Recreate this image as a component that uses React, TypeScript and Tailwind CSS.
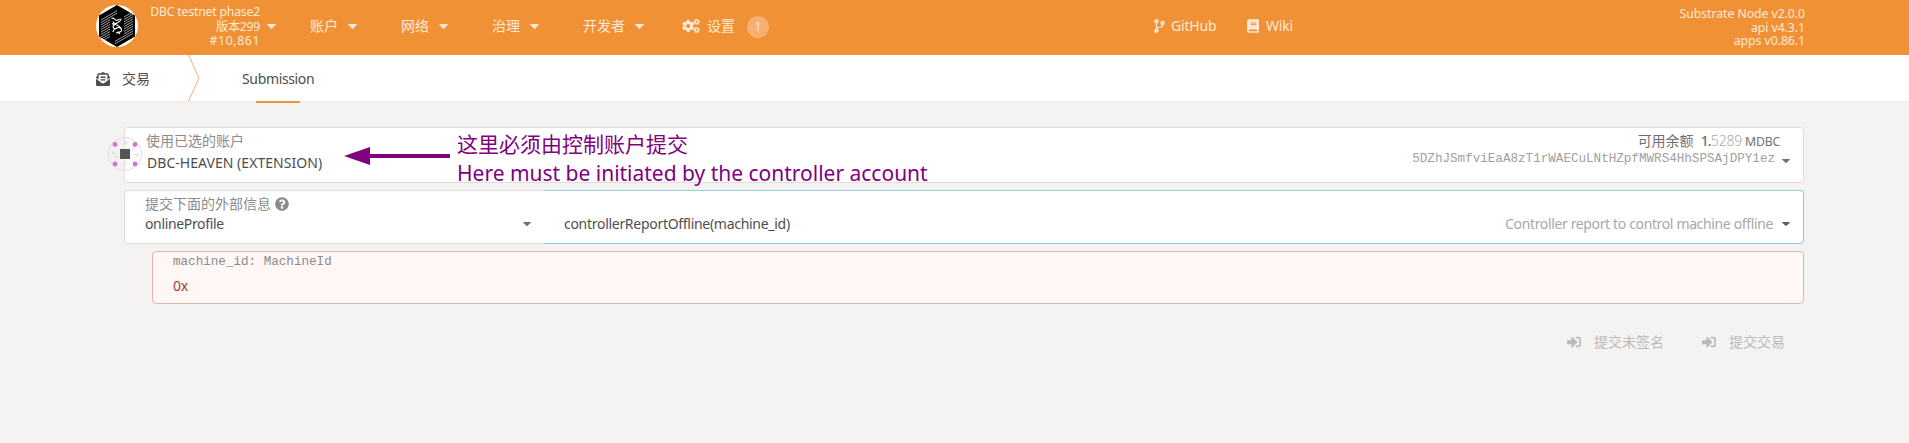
import type { ReactNode } from "react";
import { FaBook, FaCodeBranch, FaCogs, FaEnvelopeOpenText, FaQuestionCircle, FaSignInAlt } from "react-icons/fa";

function Caret({ className }: { className: string }) {
  return (
    <svg viewBox="0 0 10 6" preserveAspectRatio="none" className={`block shrink-0 ${className}`} fill="currentColor">
      <path d="M.6 0h8.8q.9.2.3 1L5.6 5.6q-.6.5-1.200 0L.3 1Q-.3.2.6 0z" />
    </svg>
  );
}

function Logo() {
  const rows = [0, 1, 2, 3, 4, 5, 6, 7, 8, 9];
  return (
    <svg viewBox="0 0 42 42" className="mt-[5px] ml-24 block h-[42px] w-[42px] shrink-0">
      <circle cx="21" cy="21" r="21" fill="#fff" />
      <path d="M21 0 39 10.500v21L21 42 3 31.500v-21z" fill="#000" />
      <g stroke="#c4c4c4" strokeWidth=".8">
        {rows.map((i) => (
          <path key={i} d={`M5 ${15 + i * 2.4} L${i < 2 ? 21 : 14} ${(i < 2 ? 5.800 : 9.800) + i * 2.4}`} />
        ))}
        {rows.map((i) => (
          <path key={i} d={`M${i > 7 ? 19 : 28} ${(i > 7 ? 17.200 : 12) + i * 2.4} L37 ${6.800 + i * 2.4}`} />
        ))}
      </g>
      <g stroke="#fff" strokeWidth="1.100" fill="none">
        <path d="M15.500 13.500q2-1 3.500 1t4.500-.5M25 13.500c0 5-8 4.500-8 8.500M16 18.500q2 1.500 4.500-.5M17 16.500c1 4 8.500 4 8.500 8.500M17 22q1 2.500 4 1t4.500 1.500q.5 3-4 2.500M17 27c0-3 3-3.500 5-4.500M24 29q-1-2-4-1" />
      </g>
    </svg>
  );
}

function NavItem({ label, className }: { label: string; className: string }) {
  return (
    <div className={`flex items-center gap-[10px] ${className}`}>
      <span>{label}</span>
      <Caret className="mt-px h-[5px] w-[9px]" />
    </div>
  );
}

function Header() {
  return (
    <header className="flex h-[55px] bg-[#f19135] text-[14px] leading-5 text-[#fde9d6]">
      <Logo />
      <div className="mt-[5px] w-[122px] text-right text-[12.25px] leading-[14.5px]">
        <div className="tracking-[-0.2px]">DBC testnet phase2</div>
        <div className="tracking-[-0.3px]">版本299</div>
        <div className="tracking-[0.6px]">#10,861</div>
      </div>
      <Caret className="mt-6 ml-[7px] h-[5px] w-[9px]" />
      <nav className="flex h-[52px] items-center">
        <NavItem label="账户" className="ml-[34px] w-[91px]" />
        <NavItem label="网络" className="w-[91px]" />
        <NavItem label="治理" className="w-[91px]" />
        <NavItem label="开发者" className="w-[99px]" />
        <FaCogs className="h-[14px] w-[18px]" />
        <span className="ml-[7px]">设置</span>
        <span className="mt-[2px] ml-3 flex h-[22px] w-[22px] items-center justify-center rounded-full bg-[#f5b072] text-[12px]">1</span>
      </nav>
      <nav className="ml-[385px] flex h-[52px] items-center tracking-[-0.2px]">
        <FaCodeBranch className="h-[14px] w-[11px]" />
        <span className="ml-[6px] w-[76px]">GitHub</span>
        <FaBook className="h-[14px] w-[12px]" />
        <span className="ml-[7px]">Wiki</span>
      </nav>
      <div className="mt-[7px] mr-[104px] ml-auto text-right text-[12.25px] leading-[13.5px] tracking-[-0.05px]">
        <div>Substrate Node v2.0.0</div>
        <div>api v4.3.1</div>
        <div>apps v0.86.1</div>
      </div>
    </header>
  );
}

function TabBar() {
  return (
    <div className="flex h-[47px] border-b border-[#ebebeb] bg-white pl-24 text-[#4e4e4e]">
      <div className="flex h-[48px] w-[92px] items-center">
        <FaEnvelopeOpenText className="h-[14px] w-[14px]" />
        <span className="ml-3">交易</span>
      </div>
      <svg viewBox="0 0 12 46" className="block h-[46px] w-3" fill="none" stroke="#f5b072">
        <path d="M.5 0 11 23 .5 46" />
      </svg>
      <div className="relative ml-[42px] flex h-[48px] items-center tracking-[-0.35px]">
        Submission
        <span className="absolute bottom-0 left-[14px] h-[2px] w-11 bg-[#f19135]" />
      </div>
    </div>
  );
}

function Identicon() {
  return (
    <svg viewBox="0 0 34 34" className="absolute top-[9px] left-[-17px] h-[34px] w-[34px]">
      <circle cx="17" cy="17" r="16.500" fill="#eee" fillOpacity=".2" stroke="#dededf" />
      <path d="M16 10 17 3.500l3 1.500zM18 24l-1 6-3-1zM10 17.500l-6-.5 0-3zM24 17.500l6-.5 0 3zM10 21l-3 1 2-3zM24 11l3-1-2 3z" fill="#e2e2e2" />
      <g fill="#d176d4">
        <circle cx="7" cy="7.500" r="2.400" />
        <circle cx="27" cy="7.500" r="2.400" />
        <circle cx="7" cy="27" r="2.400" />
        <circle cx="27" cy="27" r="2.400" />
      </g>
      <path d="M12 12h10v10H12z" fill="#555" />
    </svg>
  );
}

function Annotation() {
  return (
    <div className="absolute top-0 left-[219px] flex text-[21px] leading-[29px] text-[#800080]">
      <svg viewBox="0 0 106 20" className="mt-[18px] block h-5 w-[106px]" fill="currentColor">
        <path d="M0 10 26 1v7h80v4H26v7z" />
      </svg>
      <div className="mt-[2px] ml-[7px] tracking-[-0.01px]">
        <div>这里必须由控制账户提交</div>
        <div>Here must be initiated by the controller account</div>
      </div>
    </div>
  );
}

function AccountCard() {
  return (
    <section className="relative flex h-14 justify-between rounded border border-[#dededf] bg-white">
      <Identicon />
      <div className="pl-[21px]">
        <div className="mt-[3px] text-[#8b8b8b]">使用已选的账户</div>
        <div className="mt-[2px] ml-px tracking-[0.04px]">DBC-HEAVEN (EXTENSION)</div>
      </div>
      <Annotation />
      <div className="relative mt-[3px] flex w-[440px] flex-col items-end text-[#707070]">
        <div className="mr-[23px] flex items-baseline">
          <span>可用余额</span>
          <span className="ml-[7px] font-medium tracking-[-0.8px]">1.</span>
          <span className="font-light tracking-[-0.2px] text-[#aaa]">5289</span>
          <span className="ml-[3px] text-[12.25px] tracking-[-0.2px]">MDBC</span>
        </div>
        <div className="mt-[-3px] mr-[28px] font-['Liberation_Mono',monospace] text-[12.6px] text-[#a0a0a0]">
          5DZhJSmfviEaA8zT1rWAECuLNtHZpfMWRS4HhSPSAjDPY1ez
        </div>
        <Caret className="absolute top-[28px] right-[13px] h-[4px] w-[8px]" />
      </div>
    </section>
  );
}

function ExtrinsicCard() {
  return (
    <section className="mt-[7px] flex h-[54px]">
      <div className="w-[420px] rounded-l border border-r-0 border-[#dededf] bg-white pl-[20px]">
        <div className="mt-[3px] flex items-center text-[#8b8b8b]">
          提交下面的外部信息
          <FaQuestionCircle className="ml-1 h-[14px] w-[14px]" />
        </div>
        <div className="flex items-center justify-between pr-[13px]">
          <span className="tracking-[-0.35px]">onlineProfile</span>
          <Caret className="h-[4px] w-[8px] text-[#707070]" />
        </div>
      </div>
      <div className="flex flex-1 items-center rounded-r border border-l-0 border-[#96c8da] bg-white pt-[14px] pl-5">
        <span className="tracking-[-0.29px]">controllerReportOffline(machine_id)</span>
        <span className="ml-auto tracking-[-0.36px] text-[#a8a8a8]">Controller report to control machine offline</span>
        <Caret className="mr-[13px] ml-[9px] h-[4px] w-[8px] text-[#606060]" />
      </div>
    </section>
  );
}

function ParamCard() {
  return (
    <section className="mt-[7px] ml-7 h-[53px] rounded border border-[#e0b4b4] bg-[#fff6f6] pl-[20px]">
      <div className="font-['Liberation_Mono',monospace] text-[12.6px] text-[#8b8b8b]">machine_id: MachineId</div>
      <div className="mt-[4px] tracking-[-0.2px] text-[#9f3a38]">0x</div>
    </section>
  );
}

function ActionButton({ className, children }: { className: string; children: ReactNode }) {
  return (
    <button className={`flex items-center ${className}`}>
      <FaSignInAlt className="mr-[13px] h-[14px] w-[14px]" />
      {children}
    </button>
  );
}

export default function App() {
  return (
    <div className="h-[443px] overflow-hidden bg-[#f4f3f1] font-['Noto_Sans','Noto_Sans_CJK_SC',sans-serif] text-[14px] leading-5 whitespace-nowrap text-[#4e4e4e]">
      <Header />
      <TabBar />
      <main className="mt-[25px] mr-[105px] ml-[124px]">
        <AccountCard />
        <ExtrinsicCard />
        <ParamCard />
        <div className="mt-7 flex justify-end text-[#bcbbba]">
          <ActionButton className="mr-[38px]">提交未签名</ActionButton>
          <ActionButton className="mr-[19px]">提交交易</ActionButton>
        </div>
      </main>
    </div>
  );
}
